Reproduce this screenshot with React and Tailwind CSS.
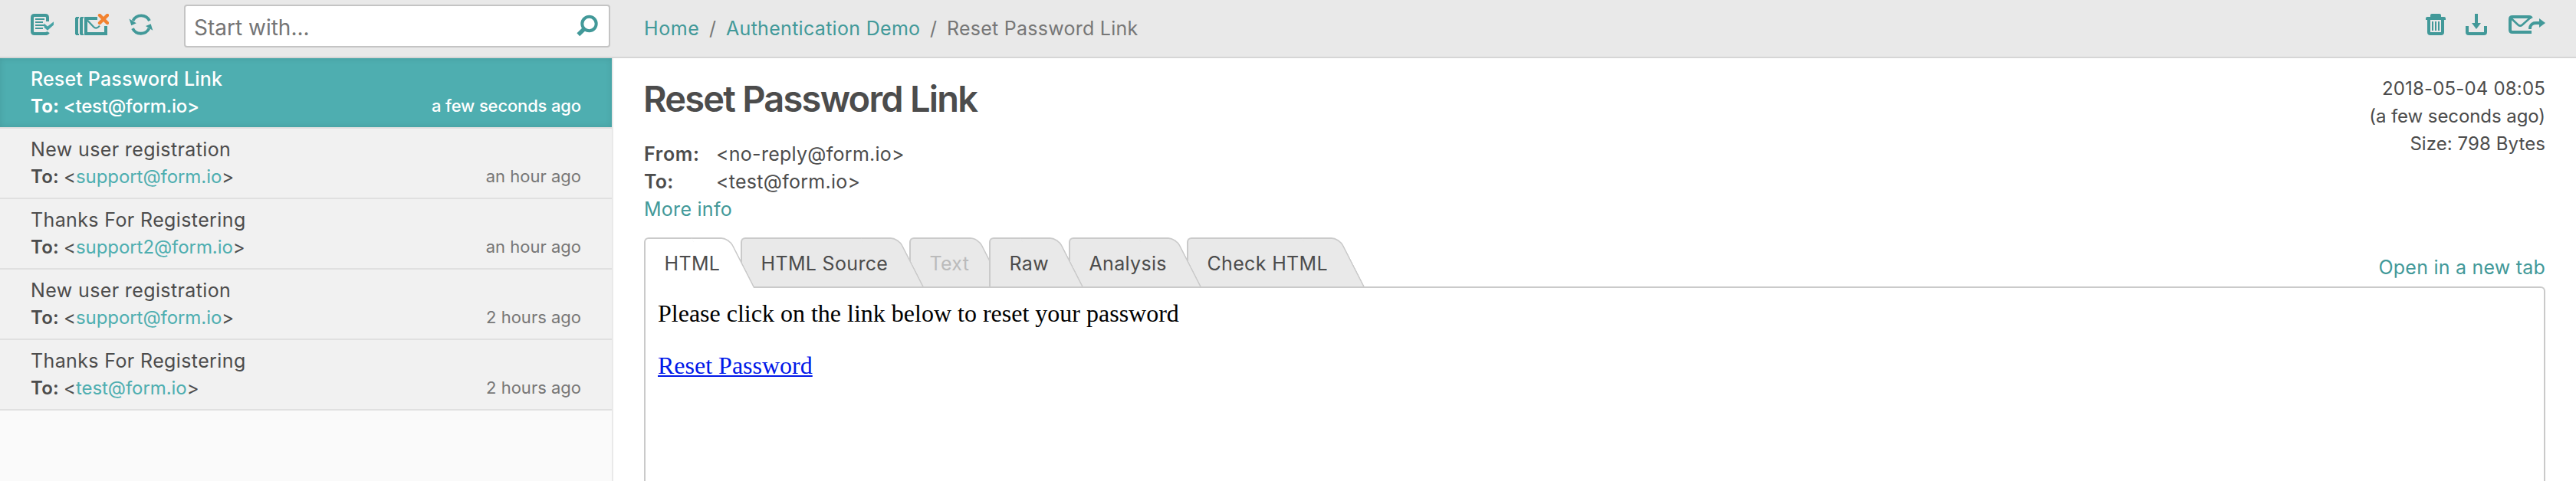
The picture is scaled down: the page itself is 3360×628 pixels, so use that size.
const messages = [
  { subject: 'Reset Password Link', to: 'test@form.io', time: 'a few seconds ago', selected: true },
  { subject: 'New user registration', to: 'support@form.io', time: 'an hour ago' },
  { subject: 'Thanks For Registering', to: 'support2@form.io', time: 'an hour ago' },
  { subject: 'New user registration', to: 'support@form.io', time: '2 hours ago' },
  { subject: 'Thanks For Registering', to: 'test@form.io', time: '2 hours ago' },
];

const tabs = [
  { label: 'HTML', size: 'w-[126px] z-60', active: true },
  { label: 'HTML Source', size: 'w-[220px] z-50' },
  { label: 'Text', size: 'w-[104px] z-10', disabled: true },
  { label: 'Raw', size: 'w-[104px] z-40' },
  { label: 'Analysis', size: 'w-[154px] z-30' },
  { label: 'Check HTML', size: 'w-[213px] z-20' },
];

function MarkReadIcon() {
  return (
    <svg className="block h-[28px] w-[30px]" viewBox="40 18 30 28" fill="none">
      <path d="M62 28V23q0-3-3-3H45q-3 0-3 3v18q0 3 3 3h14q3 0 4-2" stroke="#429999" strokeWidth="4" />
      <path d="M46 25h12M46 29h10M46 33h12M46 37h10" stroke="#429999" strokeWidth="2" />
      <path d="M57.500 30.500L62 34.500L70 28.300V32.500L62 39.700L57.500 35.700Z" fill="#46a3a5" />
    </svg>
  );
}

function ClearInboxIcon() {
  return (
    <svg className="block h-[28px] w-[44px]" viewBox="98 18 44 28" fill="none">
      <path d="M98 23h1v-1h4v2h-1v20h1v2h-4v-1h-1zM104 23h1v-1h4v2h-1v20h1v2h-4v-1h-1z" fill="#429999" />
      <path d="M127 24H112V44H138V34" stroke="#429999" strokeWidth="4" />
      <path d="M114 26.500l8 8.500q3 2.800 6 .5l2-1.800" stroke="#429999" strokeWidth="2.200" />
      <path d="M130 20l10 10M140 20l-10 10" stroke="#f2822f" strokeWidth="4.400" strokeLinecap="round" />
    </svg>
  );
}

function RefreshIcon() {
  return (
    <svg className="block h-[28px] w-[32px]" viewBox="168 18 32 28" fill="none">
      <path d="M173.500 27A12 12 0 0 1 195 27.200" stroke="#429999" strokeWidth="3.800" />
      <path d="M194.500 37A12 12 0 0 1 173 37.200" stroke="#429999" strokeWidth="3.800" />
      <path d="M168.500 24.500L177.800 30.300L171.300 33.200ZM199.300 39.800L190 34L196.700 31.200Z" fill="#429999" />
    </svg>
  );
}

function SearchIcon() {
  return (
    <svg className="block h-[30px] w-[30px]" viewBox="752 18 30 30" fill="none">
      <circle cx="768.500" cy="31" r="9.200" stroke="#429999" strokeWidth="4" />
      <path d="M762 37.700L754.300 45.200" stroke="#429999" strokeWidth="5.400" />
    </svg>
  );
}

function TrashIcon() {
  return (
    <svg className="block h-[28px] w-[26px]" viewBox="3164 18 26 28" fill="none">
      <path d="M3170 22v-2q0-2 2-2h10q2 0 2 2v2h4q2 0 2 2v2h-26v-2q0-2 2-2z" fill="#429999" />
      <path d="M3168 25v17q0 2 2 2h14q2 0 2-2v-17" stroke="#429999" strokeWidth="4" />
      <path d="M3173 28v12M3177 28v12M3181 28v12" stroke="#429999" strokeWidth="2" />
    </svg>
  );
}

function DownloadIcon() {
  return (
    <svg className="block h-[28px] w-[28px]" viewBox="3216 18 28 28" fill="none">
      <path d="M3218 34v8q0 2 2 2h20q2 0 2-2v-8" stroke="#429999" strokeWidth="4" />
      <path d="M3228 18h4v12h4l-6 8l-6-8h4z" fill="#429999" />
    </svg>
  );
}

function ForwardIcon() {
  return (
    <svg className="block h-[28px] w-[48px]" viewBox="3272 18 48 28" fill="none">
      <path d="M3302 24q-1-2-3-2h-22q-3 0-3 3v14q0 3 3 3h25" stroke="#429999" strokeWidth="4" />
      <path d="M3275.500 24l9 8.500q2.700 2.400 5.400 0l10.600-9.500" stroke="#429999" strokeWidth="2.600" />
      <path d="M3300 38v-1.500q.8-6.500 8-6.500h5" stroke="#429999" strokeWidth="3.800" />
      <path d="M3312 24L3320 30L3312 36Z" fill="#429999" />
    </svg>
  );
}

function Message({ subject, to, time, selected }) {
  return (
    <li
      className={
        selected
          ? 'box-content flex h-[90px] flex-col border-b-2 border-[#e0e0e0] bg-[#4eaeb0] px-[40px] font-medium text-white shadow-[inset_0_0_8px_rgba(0,0,0,0.1)]'
          : 'box-content flex h-[90px] flex-col border-b-2 border-[#e0e0e0] bg-[#f1f1f1] px-[40px] text-[#4c4c4c]'
      }
    >
      <div className={selected ? 'mt-[9px] text-[25px] leading-[36px] tracking-[0.160px]' : 'mt-[9px] text-[25px] leading-[36px] tracking-[0.380px]'}>
        {subject}
      </div>
      <div className="flex items-start justify-between">
        <div className="text-[24px] leading-[36px] tracking-[-0.060px] whitespace-pre">
          <span className={selected ? 'font-bold tracking-[0.050px]' : 'font-semibold tracking-[0.200px]'}>To: </span>
          <span className={selected ? 'tracking-[-0.250px]' : ''}>
            &lt;<span className={selected ? '' : 'text-[#4eaeb0]'}>{to}</span>&gt;
          </span>
        </div>
        <div className={selected ? 'text-[22px] leading-[34px] tracking-[-0.150px]' : 'text-[22px] leading-[34px] text-[#777777]'}>{time}</div>
      </div>
    </li>
  );
}

function Tab({ label, size, active, disabled }) {
  const fill = active ? 'bg-white' : 'bg-[#e9e9e9]';
  const height = active ? 'h-[66px]' : 'h-[64px]';
  const color = disabled ? 'text-[#bbbbbb]' : 'text-[#4c4c4c]';
  return (
    <li className={`relative h-[64px] shrink-0 ${size}`}>
      <span className={`absolute top-0 right-[28px] left-0 rounded-tl-[6px] border-t-2 border-l-2 border-[#cacaca] ${height} ${fill}`} />
      <span className={`absolute top-0 right-[-19px] w-[50px] origin-bottom skew-x-[27deg] rounded-tr-[11px] border-t-2 border-r-2 border-[#cacaca] ${height} ${fill}`} />
      <span className={`relative block pt-[16px] pl-[26.500px] text-[25px] leading-[36px] tracking-[0.330px] whitespace-nowrap ${color}`}>{label}</span>
    </li>
  );
}

export default function App() {
  return (
    <div className="flex h-[628px] w-[3360px] flex-col overflow-hidden bg-white font-['Inter','Liberation_Sans',sans-serif]">
      <header className="flex h-[76px] shrink-0 border-b-2 border-[#d6d6d6] bg-[#e9e9e9]">
        <div className="flex w-[800px] items-start pl-[40px]">
          <div className="mt-[18px] flex">
            <MarkReadIcon />
            <span className="mr-[26px] ml-[28px]">
              <ClearInboxIcon />
            </span>
            <RefreshIcon />
          </div>
          <div className="mt-[6px] ml-[40px] flex h-[56px] w-[556px] items-start justify-between rounded-[4px] border-2 border-[#c4c4c4] bg-white pr-[12px] pl-[11px]">
            <span className="mt-[10px] text-[28px] leading-[36px] text-[#757575]">Start with...</span>
            <span className="mt-[10px]">
              <SearchIcon />
            </span>
          </div>
        </div>
        <div className="flex flex-1 items-start justify-between px-[40px]">
          <nav className="mt-[19px] flex text-[25px] leading-[36px] tracking-[0.300px] text-[#777777]">
            <a className="w-[85px] tracking-[0.600px] text-[#429999]">Home</a>
            <span className="w-[22px]">/</span>
            <a className="w-[266px] text-[#429999]">Authentication Demo</a>
            <span className="w-[22px]">/</span>
            <span className="tracking-[0.250px]">Reset Password Link</span>
          </nav>
          <div className="mt-[18px] flex">
            <TrashIcon />
            <span className="mr-[28px] ml-[26px]">
              <DownloadIcon />
            </span>
            <ForwardIcon />
          </div>
        </div>
      </header>

      <div className="flex min-h-0 flex-1">
        <aside className="w-[800px] shrink-0 border-r-2 border-[#e9e9e9] bg-[#fafafa]">
          <ul>
            {messages.map((message, i) => (
              <Message key={i} {...message} />
            ))}
          </ul>
        </aside>

        <main className="flex flex-1 flex-col px-[40px]">
          <div className="flex justify-between text-[#4c4c4c]">
            <div>
              <h1 className="mt-[23px] -ml-px text-[47px] leading-[60px] font-semibold tracking-[-1.780px]">Reset Password Link</h1>
              <div className="mt-[24px] grid grid-cols-[94px_auto] text-[25px] leading-[36px] tracking-[0.270px] whitespace-nowrap">
                <span className="font-semibold tracking-[0.700px]">From:</span>
                <span>&lt;no-reply@form.io&gt;</span>
                <span className="font-semibold">To:</span>
                <span>&lt;test@form.io&gt;</span>
                <a className="text-[#429999]">More info</a>
              </div>
            </div>
            <div className="mt-[22px] text-right text-[24px] leading-[36px]">
              <div className="tracking-[0.180px]">2018-05-04 08:05</div>
              <div className="tracking-[-0.080px]">(a few seconds ago)</div>
              <div className="tracking-[0.080px]">Size: 798 Bytes</div>
            </div>
          </div>

          <div className="mt-[19px] flex h-[64px] shrink-0 items-start justify-between">
            <ul className="relative z-10 flex">
              {tabs.map((tab) => (
                <Tab key={tab.label} {...tab} />
              ))}
            </ul>
            <a className="mt-[21px] text-[25px] leading-[36px] tracking-[0.220px] text-[#429999]">Open in a new tab</a>
          </div>

          <section className="flex flex-1 flex-col items-start gap-[32px] rounded-tr-[6px] border-2 border-b-0 border-[#cacaca] pt-[15px] pl-[16px] font-['Liberation_Serif','Times_New_Roman',serif] text-[32px] leading-[36px] text-black">
            <p>Please click on the link below to reset your password</p>
            <a className="text-[#0018e8] underline decoration-2 underline-offset-[2px]">Reset Password</a>
          </section>
        </main>
      </div>
    </div>
  );
}
